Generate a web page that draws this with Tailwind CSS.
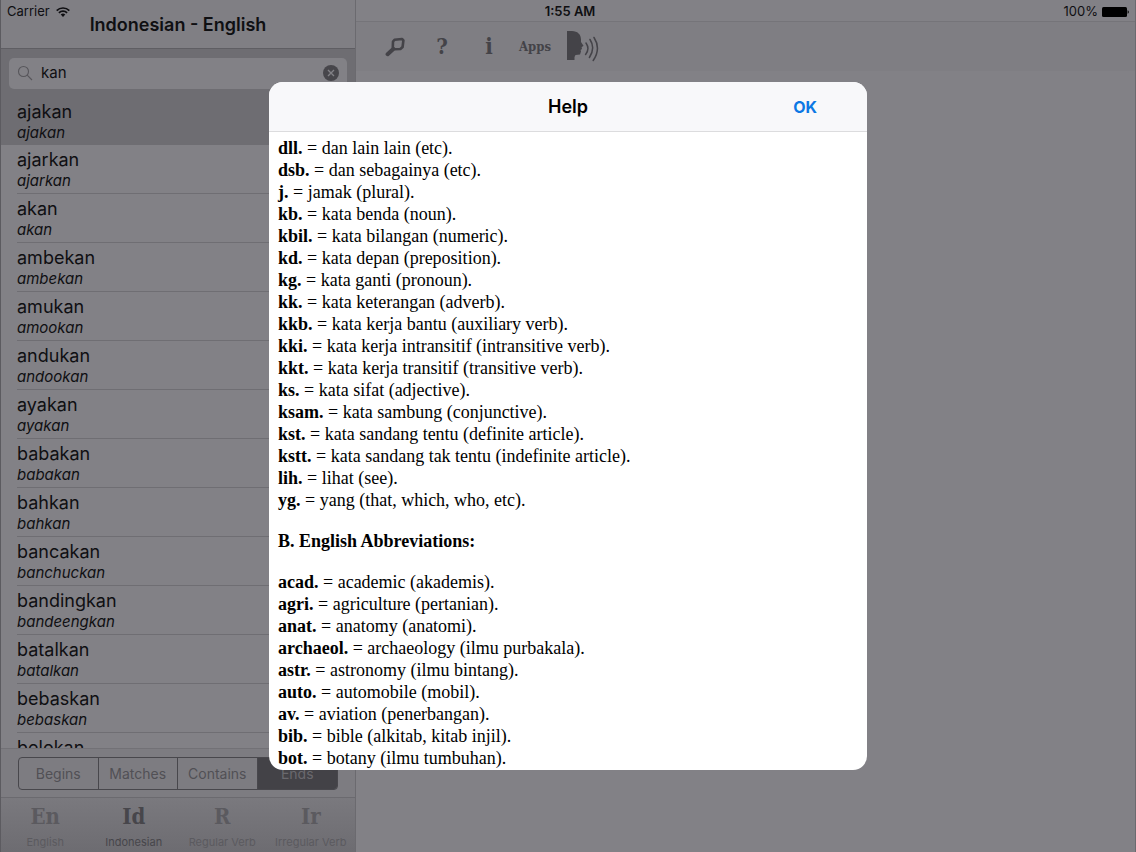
<!DOCTYPE html>
<html lang="en">
<head>
    <meta charset="UTF-8">
    <meta name="viewport" content="width=device-width, initial-scale=1.0">
    <title>Indonesian - English Dictionary</title>
    <script src="https://cdn.jsdelivr.net/npm/@tailwindcss/browser@4"></script>
</head>
<body class="bg-[#828186] font-['Inter',sans-serif] text-[#0f0f12]">
    <div class="relative h-screen flex overflow-hidden">

        <!-- Status bar -->
        <div class="absolute inset-x-0 top-0 h-[23px] px-[7px] grid grid-cols-3 items-center text-[13px]">
            <div class="flex items-center gap-[6px]">
                <span>Carrier</span>
                <svg class="w-[14px] h-[10px]" viewBox="0 0 14 10" fill="none" stroke="currentColor" stroke-width="1.7">
                    <path d="M0.7 3.6a8.9 8.9 0 0 1 12.6 0M2.9 5.9a5.8 5.8 0 0 1 8.2 0"/>
                    <path d="M7 10L4.7 7.6a3.3 3.3 0 0 1 4.6 0z" fill="currentColor" stroke="none"/>
                </svg>
            </div>
            <div class="pl-1 text-center font-semibold">1:55 AM</div>
            <div class="flex items-center justify-end gap-1">
                <span>100%</span>
                <svg class="w-[27px] h-[10px]" viewBox="0 0 27 10" fill="#000">
                    <rect x="0" y="0" width="25" height="10" rx="1.5"/>
                    <path d="M25.6 3.2c1.6.4 1.6 3.2 0 3.6z"/>
                </svg>
            </div>
        </div>

        <!-- Sidebar -->
        <aside class="w-[356px] shrink-0 flex flex-col border-x border-l-[#5c5b60] border-r-[#6b6a6f]">
            <header class="h-[49px] shrink-0 flex items-center justify-center border-b border-[#5f5e63] bg-[#807f84]">
                <h1 class="text-[18px] font-semibold">Indonesian - English</h1>
            </header>

            <form class="h-[48px] shrink-0 px-2 flex items-center bg-[#6e6d72]">
                <label class="w-full h-[31px] px-2 flex items-center gap-2 rounded-[5px] bg-[#828186]">
                    <svg class="w-4 h-4 shrink-0" viewBox="0 0 16 16" fill="none" stroke="#57565b" stroke-width="1.1" aria-label="Search">
                        <circle cx="6.5" cy="6.5" r="5"/>
                        <path d="M10.2 10.2L15 15"/>
                    </svg>
                    <input type="text" value="kan" aria-label="Search word" class="flex-1 min-w-0 bg-transparent text-[15px] outline-none">
                    <button type="button" aria-label="Clear">
                        <svg class="w-4 h-4" viewBox="0 0 16 16">
                            <circle cx="8" cy="8" r="8" fill="#47464b"/>
                            <path d="M5 5l6 6M11 5l-6 6" stroke="#828186" stroke-width="1.4"/>
                        </svg>
                    </button>
                </label>
            </form>

            <ul class="flex-1 min-h-0 overflow-hidden text-[18px] leading-[22px]">
                <li class="pl-4 bg-[#6e6d72]"><a href="#" class="block h-12 pt-1">ajakan<i class="block text-[15px] leading-5">ajakan</i></a></li>
                <li class="pl-4"><a href="#" class="block h-[49px] pt-1 border-b border-[#6f6e73]">ajarkan<i class="block text-[15px] leading-5">ajarkan</i></a></li>
                <li class="pl-4"><a href="#" class="block h-[49px] pt-1 border-b border-[#6f6e73]">akan<i class="block text-[15px] leading-5">akan</i></a></li>
                <li class="pl-4"><a href="#" class="block h-[49px] pt-1 border-b border-[#6f6e73]">ambekan<i class="block text-[15px] leading-5">ambekan</i></a></li>
                <li class="pl-4"><a href="#" class="block h-[49px] pt-1 border-b border-[#6f6e73]">amukan<i class="block text-[15px] leading-5">amookan</i></a></li>
                <li class="pl-4"><a href="#" class="block h-[49px] pt-1 border-b border-[#6f6e73]">andukan<i class="block text-[15px] leading-5">andookan</i></a></li>
                <li class="pl-4"><a href="#" class="block h-[49px] pt-1 border-b border-[#6f6e73]">ayakan<i class="block text-[15px] leading-5">ayakan</i></a></li>
                <li class="pl-4"><a href="#" class="block h-[49px] pt-1 border-b border-[#6f6e73]">babakan<i class="block text-[15px] leading-5">babakan</i></a></li>
                <li class="pl-4"><a href="#" class="block h-[49px] pt-1 border-b border-[#6f6e73]">bahkan<i class="block text-[15px] leading-5">bahkan</i></a></li>
                <li class="pl-4"><a href="#" class="block h-[49px] pt-1 border-b border-[#6f6e73]">bancakan<i class="block text-[15px] leading-5">banchuckan</i></a></li>
                <li class="pl-4"><a href="#" class="block h-[49px] pt-1 border-b border-[#6f6e73]">bandingkan<i class="block text-[15px] leading-5">bandeengkan</i></a></li>
                <li class="pl-4"><a href="#" class="block h-[49px] pt-1 border-b border-[#6f6e73]">batalkan<i class="block text-[15px] leading-5">batalkan</i></a></li>
                <li class="pl-4"><a href="#" class="block h-[49px] pt-1 border-b border-[#6f6e73]">bebaskan<i class="block text-[15px] leading-5">bebaskan</i></a></li>
                <li class="pl-4"><a href="#" class="block h-[49px] pt-1 border-b border-[#6f6e73]">belokan<i class="block text-[15px] leading-5">belokan</i></a></li>
            </ul>

            <div class="h-[49px] shrink-0 px-[17px] flex items-center border-t border-[#727176] bg-[#7d7c81]">
                <div class="w-full h-[33px] grid grid-cols-4 divide-x divide-[#48474c] border border-[#48474c] rounded-[4px] overflow-hidden text-[14px] text-[#515055]">
                    <button type="button">Begins</button>
                    <button type="button">Matches</button>
                    <button type="button">Contains</button>
                    <button type="button" class="bg-[#434247] text-[#6a696e]">Ends</button>
                </div>
            </div>

            <nav class="h-[55px] shrink-0 grid grid-cols-4 border-t border-[#6b6a6f] bg-linear-to-b from-[#7a797e] to-[#6d6c71] text-[11px] leading-[14px] text-center text-[#5b5a5f]">
                <a href="#" class="pt-[3px]"><b class="block text-[22px] leading-[30px] font-['DejaVu_Serif_Condensed','DejaVu_Serif',serif]">En</b><span class="block pt-1">English</span></a>
                <a href="#" class="pt-[3px] text-[#47464b]"><b class="block text-[22px] leading-[30px] font-['DejaVu_Serif_Condensed','DejaVu_Serif',serif]">Id</b><span class="block pt-1">Indonesian</span></a>
                <a href="#" class="pt-[3px]"><b class="block text-[22px] leading-[30px] font-['DejaVu_Serif_Condensed','DejaVu_Serif',serif]">R</b><span class="block pt-1">Regular Verb</span></a>
                <a href="#" class="pt-[3px]"><b class="block text-[22px] leading-[30px] font-['DejaVu_Serif_Condensed','DejaVu_Serif',serif]">Ir</b><span class="block pt-1">Irregular Verb</span></a>
            </nav>
        </aside>

        <!-- Detail pane -->
        <main class="flex-1 min-w-0 flex flex-col pt-[21px] border-r border-[#6b6a6f]">
            <div class="h-[50px] shrink-0 pl-[29px] flex items-center border-t border-[#757479] bg-[#7f7e83] text-[#444348] font-bold font-['DejaVu_Serif_Condensed','DejaVu_Serif',serif]">
                <button type="button" aria-label="Search" class="w-5">
                    <svg class="w-5 h-5" viewBox="0 0 20 20" fill="none" stroke="currentColor">
                        <path d="M9.5 2.8L17 2L18.4 3.4L17.6 10L15.4 12L9.500 12.200L7.800 10.400L8 4.500z" stroke-width="2.6" stroke-linejoin="round"/>
                        <path d="M8 12.200L2.600 17.200" stroke-width="4" stroke-linecap="round"/>
                    </svg>
                </button>
                <button type="button" class="w-[74px] text-[22px]">?</button>
                <button type="button" class="w-5 text-[22px]">i</button>
                <button type="button" class="w-[72px] text-[13px]">Apps</button>
                <button type="button" aria-label="Speak" class="w-8 -ml-1">
                    <svg class="w-8 h-8" viewBox="0 0 32 32" fill="currentColor">
                        <path d="M0 0H5C10.500 0 14 3.500 14 8.500V11L16.500 14.800L14.600 16.200L15 18L13.600 19L14 20.600L13 23.600L8.500 24L7.500 26V29H0z"/>
                        <g fill="none" stroke="currentColor" stroke-width="1.5" stroke-linecap="round">
                            <path d="M19 12c2.400 3.500 2.400 8-.4 11.500M23 8.500c3.600 5.500 3.400 12-.6 18M27 6.500c4.600 7 4.300 15.500-.8 23"/>
                        </g>
                    </svg>
                </button>
            </div>
        </main>

        <!-- Help dialog -->
        <div class="absolute inset-0 flex items-center justify-center">
            <section role="dialog" aria-labelledby="helpTitle" class="w-full max-w-[598px] h-full max-h-[688px] flex flex-col rounded-[14px] bg-white text-black overflow-hidden">
                <header class="h-[50px] shrink-0 grid grid-cols-[1fr_auto_1fr] items-center border-b border-[#dcdcde] bg-[#f8f8fa]">
                    <h2 id="helpTitle" class="col-start-2 text-[18px] font-semibold">Help</h2>
                    <button type="button" class="justify-self-end pr-[50px] text-[16px] font-bold text-[#0d78e4]">OK</button>
                </header>
                <div class="flex-1 min-h-0 overflow-hidden px-[9px] pt-[5px] font-['Liberation_Serif',serif] text-[18px] leading-[22px]">
                    <p><b>dll.</b> = dan lain lain (etc).</p>
                    <p><b>dsb.</b> = dan sebagainya (etc).</p>
                    <p><b>j.</b> = jamak (plural).</p>
                    <p><b>kb.</b> = kata benda (noun).</p>
                    <p><b>kbil.</b> = kata bilangan (numeric).</p>
                    <p><b>kd.</b> = kata depan (preposition).</p>
                    <p><b>kg.</b> = kata ganti (pronoun).</p>
                    <p><b>kk.</b> = kata keterangan (adverb).</p>
                    <p><b>kkb.</b> = kata kerja bantu (auxiliary verb).</p>
                    <p><b>kki.</b> = kata kerja intransitif (intransitive verb).</p>
                    <p><b>kkt.</b> = kata kerja transitif (transitive verb).</p>
                    <p><b>ks.</b> = kata sifat (adjective).</p>
                    <p><b>ksam.</b> = kata sambung (conjunctive).</p>
                    <p><b>kst.</b> = kata sandang tentu (definite article).</p>
                    <p><b>kstt.</b> = kata sandang tak tentu (indefinite article).</p>
                    <p><b>lih.</b> = lihat (see).</p>
                    <p><b>yg.</b> = yang (that, which, who, etc).</p>
                    <h3 class="my-[19px] font-bold">B. English Abbreviations:</h3>
                    <p><b>acad.</b> = academic (akademis).</p>
                    <p><b>agri.</b> = agriculture (pertanian).</p>
                    <p><b>anat.</b> = anatomy (anatomi).</p>
                    <p><b>archaeol.</b> = archaeology (ilmu purbakala).</p>
                    <p><b>astr.</b> = astronomy (ilmu bintang).</p>
                    <p><b>auto.</b> = automobile (mobil).</p>
                    <p><b>av.</b> = aviation (penerbangan).</p>
                    <p><b>bib.</b> = bible (alkitab, kitab injil).</p>
                    <p><b>bot.</b> = botany (ilmu tumbuhan).</p>
                </div>
            </section>
        </div>
    </div>
</body>
</html>
